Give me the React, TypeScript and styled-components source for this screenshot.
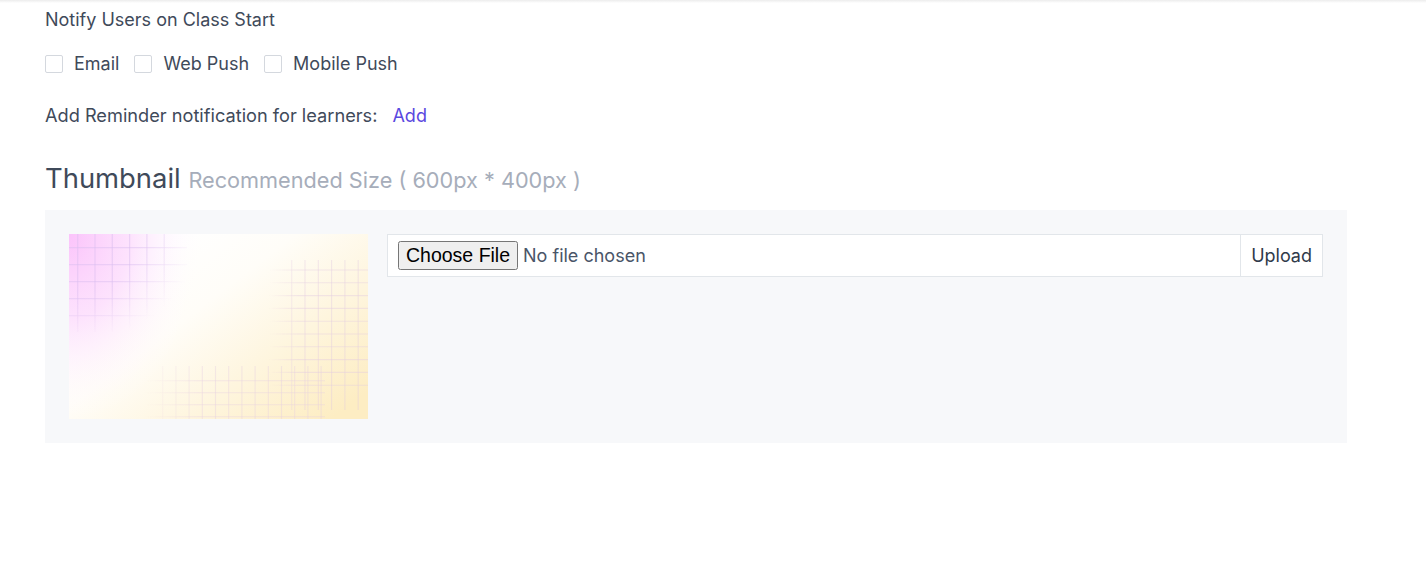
import styled, { createGlobalStyle } from "styled-components";

const GlobalStyle = createGlobalStyle`
  body {
    margin: 0;
    background: #ffffff;
    font-family: "Inter", "Noto Sans", sans-serif;
    color: #3f4a5a;
  }
`;

const TopShade = styled.div`
  height: 3px;
  background: linear-gradient(#ececec, #ffffff);
`;

const Page = styled.div`
  padding: 5px 79px 0 45px;
`;

const SectionLabel = styled.div`
  font-size: 18px;
  line-height: 24px;
  color: #3f4a5a;
`;

const CheckRow = styled.div`
  display: flex;
  align-items: center;
  margin-top: 21px;
  gap: 15px;
`;

const CheckLabel = styled.label`
  display: flex;
  align-items: center;
  gap: 11px;
  font-size: 18px;
  color: #3f4a5a;
  cursor: pointer;
`;

const Box = styled.span`
  width: 18px;
  height: 18px;
  box-sizing: border-box;
  border: 1px solid #d4d8de;
  border-radius: 2px;
  background: #ffffff;
`;

const ReminderRow = styled.div`
  display: flex;
  align-items: flex-end;
  gap: 15px;
  margin-top: 30px;
  height: 22px;
  font-size: 18.2px;
  line-height: 22px;
  color: #3f4a5a;
`;

const AddLink = styled.a`
  color: #5a48e0;
  font-size: 18px;
  line-height: 20px;
  text-decoration: none;
  cursor: pointer;
`;

const Heading = styled.h2`
  margin: 36px 0 0;
  font-weight: 400;
  font-size: 27.4px;
  line-height: 32px;
  color: #3f4a5a;
`;

const Hint = styled.span`
  font-size: 21.7px;
  color: #a6adba;
`;

const Panel = styled.div`
  margin-top: 14px;
  background: #f7f8fa;
  padding: 24px;
  display: flex;
  gap: 19px;
  align-items: flex-start;
`;

const Preview = styled.svg`
  display: block;
  flex: 0 0 auto;
`;

const InputGroup = styled.div`
  flex: 1;
  display: flex;
  height: 43px;
  box-sizing: border-box;
  border: 1px solid #e2e6ea;
  background: #ffffff;
`;

const FileInput = styled.input`
  flex: 1;
  align-self: center;
  padding-left: 10px;
  font-family: "Inter", "Noto Sans", sans-serif;
  font-size: 18px;
  color: #4a5568;

  &::file-selector-button {
    font-family: "Liberation Sans", Arial, sans-serif;
    font-size: 19.5px;
    margin-right: 5px;
  }
`;

const UploadButton = styled.button`
  border: none;
  border-left: 1px solid #e2e6ea;
  background: #ffffff;
  padding: 0 10px;
  font-family: "Inter", "Noto Sans", sans-serif;
  font-size: 18px;
  color: #2f3a4a;
  cursor: pointer;
`;

const gridLines = (
  xs: number[],
  ys: number[],
  x0: number,
  y0: number,
  x1: number,
  y1: number
) => [
  ...xs.map((x) => <line key={`v${x}`} x1={x} y1={y0} x2={x} y2={y1} />),
  ...ys.map((y) => <line key={`h${y}`} x1={x0} y1={y} x2={x1} y2={y} />),
];

const range = (start: number, step: number, count: number) =>
  Array.from({ length: count }, (_, i) => Math.round((start + i * step) * 10) / 10);

function Thumb() {
  return (
    <Preview width="299" height="185" viewBox="0 0 299 185">
      <defs>
        <linearGradient id="bg" x1="0.2" y1="0.2" x2="1" y2="0.85">
          <stop offset="0" stopColor="#ffffff" />
          <stop offset="0.3" stopColor="#fffdf8" />
          <stop offset="1" stopColor="#fdedc3" />
        </linearGradient>
        <radialGradient
          id="pink"
          gradientUnits="userSpaceOnUse"
          cx="0"
          cy="0"
          r="150"
          gradientTransform="scale(0.9 1.25)"
        >
          <stop offset="0" stopColor="#fbc3fb" stopOpacity="1" />
          <stop offset="0.45" stopColor="#fcd6fc" stopOpacity="0.7" />
          <stop offset="1" stopColor="#ffffff" stopOpacity="0" />
        </radialGradient>
        <filter id="soft">
          <feGaussianBlur stdDeviation="0.6" />
        </filter>
        <linearGradient id="fadeX" x1="0" y1="0" x2="1" y2="0">
          <stop offset="0" stopColor="#fff" stopOpacity="0" />
          <stop offset="0.3" stopColor="#fff" stopOpacity="1" />
        </linearGradient>
        <radialGradient id="fadeTL" cx="0" cy="0" r="1.1">
          <stop offset="0.55" stopColor="#fff" stopOpacity="1" />
          <stop offset="1" stopColor="#fff" stopOpacity="0" />
        </radialGradient>
        <mask id="mTL">
          <rect x="0" y="0" width="118" height="98" fill="url(#fadeTL)" />
        </mask>
        <mask id="mR">
          <rect x="200" y="24" width="99" height="152" fill="url(#fadeX)" />
        </mask>
        <mask id="mB">
          <rect x="76" y="130" width="180" height="55" fill="url(#fadeX)" />
        </mask>
      </defs>
      <rect width="299" height="185" fill="url(#bg)" />
      <rect width="299" height="185" fill="url(#pink)" />
      <g filter="url(#soft)">
        <g stroke="#d9bdf0" strokeOpacity="0.5" strokeWidth="1.2" mask="url(#mTL)">
          {gridLines(range(8.7, 17.3, 6), range(13.7, 17, 5), 0, 0, 118, 98)}
        </g>
        <g stroke="#e2c9e0" strokeOpacity="0.4" strokeWidth="1.1" mask="url(#mR)">
          {gridLines(range(222.7, 13.3, 6), range(36, 12.8, 10), 200, 26, 299, 176)}
        </g>
        <g stroke="#e4cde2" strokeOpacity="0.4" strokeWidth="1.1" mask="url(#mB)">
          {gridLines(range(93.7, 13.2, 13), range(146.7, 12, 4), 76, 132, 256, 185)}
        </g>
      </g>
    </Preview>
  );
}

export default function App() {
  return (
    <>
      <GlobalStyle />
      <TopShade />
      <Page>
        <SectionLabel>Notify Users on Class Start</SectionLabel>
        <CheckRow>
          {["Email", "Web Push", "Mobile Push"].map((label) => (
            <CheckLabel key={label}>
              <Box />
              {label}
            </CheckLabel>
          ))}
        </CheckRow>
        <ReminderRow>
          Add Reminder notification for learners:
          <AddLink>Add</AddLink>
        </ReminderRow>
        <Heading>
          Thumbnail <Hint>Recommended Size ( 600px * 400px )</Hint>
        </Heading>
        <Panel>
          <Thumb />
          <InputGroup>
            <FileInput type="file" />
            <UploadButton>Upload</UploadButton>
          </InputGroup>
        </Panel>
      </Page>
    </>
  );
}
